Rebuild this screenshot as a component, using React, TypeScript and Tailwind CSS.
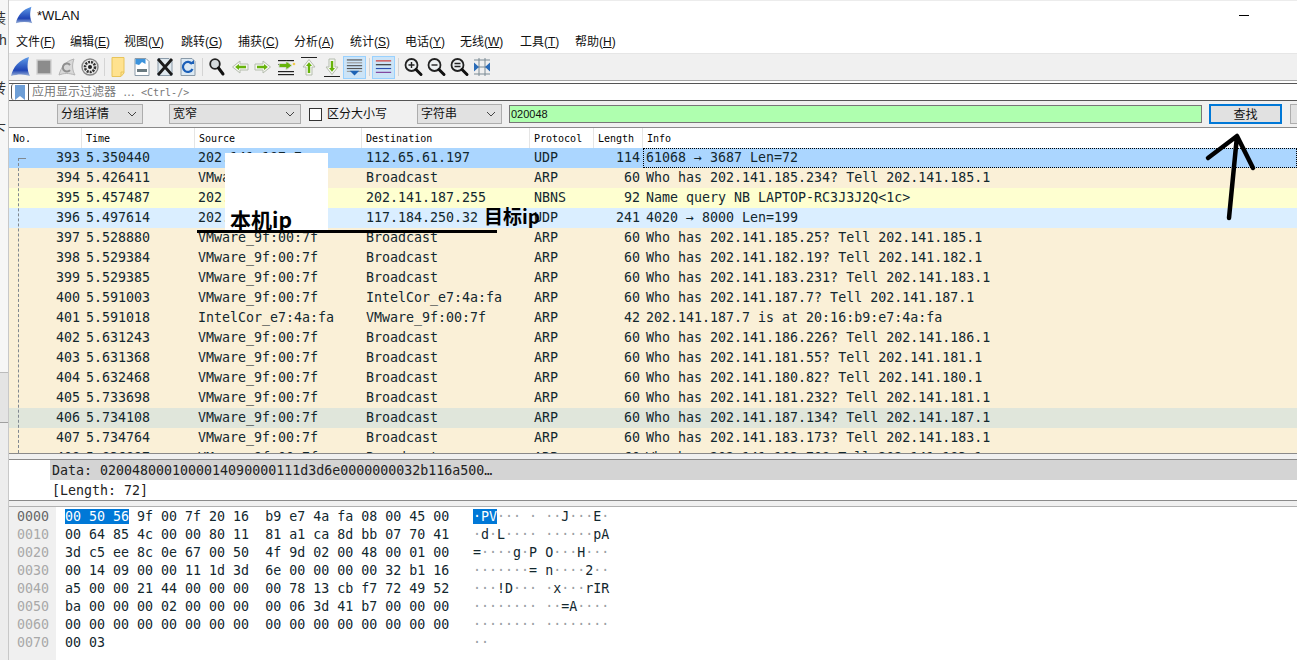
const sans = { fontFamily: '"Liberation Sans", "Noto Sans CJK SC", sans-serif' }

const menus = [
  ['文件(', 'F', ')', 'w-[54px]'],
  ['编辑(', 'E', ')', 'w-[54px]'],
  ['视图(', 'V', ')', 'w-[57px]'],
  ['跳转(', 'G', ')', 'w-[57px]'],
  ['捕获(', 'C', ')', 'w-[56px]'],
  ['分析(', 'A', ')', 'w-[56px]'],
  ['统计(', 'S', ')', 'w-[55px]'],
  ['电话(', 'Y', ')', 'w-[55px]'],
  ['无线(', 'W', ')', 'w-[60px]'],
  ['工具(', 'T', ')', 'w-[55px]'],
  ['帮助(', 'H', ')', 'w-[50px]'],
]

const arp = 'bg-[#faf0d7]'
const udp = 'bg-[#daeeff]'
const VM = 'VMware_9f:00:7f'
const rows = [
  [393, '5.350440', '202.141.187.7', '112.65.61.197', 'UDP', 114, '61068 → 3687 Len=72', 'bg-[#abd6ff]'],
  [394, '5.426411', VM, 'Broadcast', 'ARP', 60, 'Who has 202.141.185.234? Tell 202.141.185.1', arp],
  [395, '5.457487', '202.141.187.7', '202.141.187.255', 'NBNS', 92, 'Name query NB LAPTOP-RC3J3J2Q<1c>', 'bg-[#feffd0]'],
  [396, '5.497614', '202.141.187.7', '117.184.250.32', 'UDP', 241, '4020 → 8000 Len=199', udp],
  [397, '5.528880', VM, 'Broadcast', 'ARP', 60, 'Who has 202.141.185.25? Tell 202.141.185.1', arp],
  [398, '5.529384', VM, 'Broadcast', 'ARP', 60, 'Who has 202.141.182.19? Tell 202.141.182.1', arp],
  [399, '5.529385', VM, 'Broadcast', 'ARP', 60, 'Who has 202.141.183.231? Tell 202.141.183.1', arp],
  [400, '5.591003', VM, 'IntelCor_e7:4a:fa', 'ARP', 60, 'Who has 202.141.187.7? Tell 202.141.187.1', arp],
  [401, '5.591018', 'IntelCor_e7:4a:fa', VM, 'ARP', 42, '202.141.187.7 is at 20:16:b9:e7:4a:fa', arp],
  [402, '5.631243', VM, 'Broadcast', 'ARP', 60, 'Who has 202.141.186.226? Tell 202.141.186.1', arp],
  [403, '5.631368', VM, 'Broadcast', 'ARP', 60, 'Who has 202.141.181.55? Tell 202.141.181.1', arp],
  [404, '5.632468', VM, 'Broadcast', 'ARP', 60, 'Who has 202.141.180.82? Tell 202.141.180.1', arp],
  [405, '5.733698', VM, 'Broadcast', 'ARP', 60, 'Who has 202.141.181.232? Tell 202.141.181.1', arp],
  [406, '5.734108', VM, 'Broadcast', 'ARP', 60, 'Who has 202.141.187.134? Tell 202.141.187.1', 'bg-[#e0e6db]'],
  [407, '5.734764', VM, 'Broadcast', 'ARP', 60, 'Who has 202.141.183.173? Tell 202.141.183.1', arp],
  [408, '5.836897', VM, 'Broadcast', 'ARP', 60, 'Who has 202.141.183.70? Tell 202.141.183.1', arp],
] as const

const hexRows = [
  '00 50 56 9f 00 7f 20 16  b9 e7 4a fa 08 00 45 00',
  '00 64 85 4c 00 00 80 11  81 a1 ca 8d bb 07 70 41',
  '3d c5 ee 8c 0e 67 00 50  4f 9d 02 00 48 00 01 00',
  '00 14 09 00 00 11 1d 3d  6e 00 00 00 00 32 b1 16',
  'a5 00 00 21 44 00 00 00  00 78 13 cb f7 72 49 52',
  'ba 00 00 00 02 00 00 00  00 06 3d 41 b7 00 00 00',
  '00 00 00 00 00 00 00 00  00 00 00 00 00 00 00 00',
  '00 03',
]

const toAscii = (hex: string) =>
  hex.split('  ').map(part =>
    part.split(' ').map(b => {
      const c = parseInt(b, 16)
      return c > 32 && c < 127 ? String.fromCharCode(c) : c === 32 ? ' ' : '·'
    }).join('')
  ).join(' ')

const Fin = ({ id, size = 22 }: { id: string; size?: number }) => (
  <svg width={size} height={size} viewBox="0 0 22 22">
    <defs>
      <linearGradient id={id} x1="0" y1="0" x2="0" y2="1">
        <stop offset="0" stopColor="#5f9be8" />
        <stop offset="0.7" stopColor="#1f45b5" />
        <stop offset="1" stopColor="#9db4d8" />
      </linearGradient>
    </defs>
    <path d="M1 20C3 11 9 4 19 1C17 8 17 14 20 20C14 18 8 18 1 20Z" fill={`url(#${id})`} />
  </svg>
)

const Doc = ({ children, fill = '#fff', stroke = '#8a9aa8' }: { children?: React.ReactNode; fill?: string; stroke?: string }) => (
  <svg width="22" height="22" viewBox="0 0 22 22">
    <path d="M4 2.5H15L18 5.5V19.5H4Z" fill={fill} stroke={stroke} strokeWidth="1" />
    {children}
  </svg>
)

const Mag = ({ mark }: { mark?: string }) => (
  <svg width="22" height="22" viewBox="0 0 22 22">
    <circle cx="9.5" cy="9" r="6" fill="#eef1f3" stroke="#222" strokeWidth="1.8" />
    <path d="M14 13.5L19 18.5" stroke="#111" strokeWidth="3" strokeLinecap="round" />
    {mark && <path d={mark} stroke="#222" strokeWidth="1.4" fill="none" />}
  </svg>
)

const GreenArrow = ({ dir }: { dir: 'left' | 'right' | 'up' | 'down' }) => {
  const rotate = { left: 180, right: 0, up: 270, down: 90 }[dir]
  return (
    <g transform={`rotate(${rotate} 11 11)`}>
      <path d="M3 8H11V5L18.5 11L11 17V14H3Z" fill="#f5f6f1" stroke="#b5bdae" strokeWidth="1" />
      <path d="M5 9.8H12V8L15.8 11L12 14V12.2H5Z" fill="#66b30a" />
    </g>
  )
}

const Lines = ({ colors, ys }: { colors: string[]; ys: number[] }) => (
  <>
    {ys.map((y, i) => <rect key={y} x="3" y={y} width="16" height="1.2" fill={colors[i % colors.length]} />)}
  </>
)

const s22 = { width: 22, height: 22, viewBox: '0 0 22 22' }

const tools: (React.ReactNode | 'sep')[] = [
  <Fin key="start" id="finTool" />,
  <svg key="stop" {...s22}><rect x="4" y="4" width="14" height="14" fill="#8c8c8c" stroke="#d0d0d0" strokeWidth="1.4" /></svg>,
  <svg key="restart" {...s22}>
    <path d="M3 19C5 11 10 5 18 3C16 8 16 14 19 19C13 17 8 17 3 19Z" fill="#d8d8d8" stroke="#b4b4b4" />
    <path d="M14 9A4 4 0 1 0 14 14" fill="none" stroke="#8f8f8f" strokeWidth="2" />
  </svg>,
  <svg key="options" {...s22}>
    <circle cx="11" cy="11" r="8" fill="#eee" stroke="#888" strokeWidth="1.4" />
    <circle cx="11" cy="11" r="5" fill="none" stroke="#333" strokeWidth="2.6" strokeDasharray="2 1" />
    <circle cx="11" cy="11" r="2" fill="#222" />
  </svg>,
  'sep',
  <svg key="open" {...s22}>
    <path d="M4 1.5H16V17L13 20.5H4Z" fill="#ffe28f" stroke="#e8c45a" />
    <path d="M16 16H13V20" fill="none" stroke="#e8c45a" />
  </svg>,
  <Doc key="save"><path d="M4.5 3H14.5V8L11 6L8 9L4.5 8Z" fill="#3c93dc" /><rect x="6" y="13" width="10" height="3" fill="#6a7a80" /></Doc>,
  <Doc key="close" fill="#dfe8ee"><path d="M4 3L18 19M18 3L4 19" stroke="#1b1b1b" strokeWidth="2.8" /></Doc>,
  <Doc key="reload" fill="#dce9f3"><path d="M15 8A5 5 0 1 0 15.5 13" fill="none" stroke="#1b5fb8" strokeWidth="2.2" /><path d="M12 8H17V4Z" fill="#1b5fb8" /></Doc>,
  'sep',
  <svg key="find" {...s22}>
    <circle cx="9" cy="8" r="4.8" fill="#d5dbde" stroke="#222" strokeWidth="1.8" />
    <path d="M12.5 12L17 18" stroke="#111" strokeWidth="3" strokeLinecap="round" />
  </svg>,
  <svg key="back" {...s22}><GreenArrow dir="left" /></svg>,
  <svg key="forward" {...s22}><GreenArrow dir="right" /></svg>,
  <svg key="goto" {...s22}>
    <Lines colors={['#222']} ys={[4, 15, 18]} />
    <rect x="3" y="8" width="3" height="1" fill="#222" />
    <path d="M4 7.5H11V5L17 9.5L11 14V11.5H4Z" fill="#66b30a" stroke="#d4d9cf" strokeWidth="1" />
    <circle cx="19" cy="8" r="1.3" fill="#f2c94c" />
  </svg>,
  <svg key="first" {...s22}><rect x="3" y="1" width="16" height="1" fill="#222" /><GreenArrow dir="up" /></svg>,
  <svg key="last" {...s22}><rect x="3" y="20" width="16" height="1" fill="#222" /><GreenArrow dir="down" /></svg>,
  'auto',
  'sep',
  'color',
  'sep',
  <Mag key="in" mark="M6.5 9H12.5M9.5 6V12" />,
  <Mag key="out" mark="M6.5 9H12.5" />,
  <Mag key="normal" mark="M6.5 7.5H12.5M6.5 10.5H12.5" />,
  <svg key="resize" {...s22}>
    <path d="M3 4H19M3 18H19M3 11H19M8 2V20M14 2V20" stroke="#7b8a94" strokeWidth="1" />
    <path d="M3 6.5L8 11L3 15.5ZM19 6.5L14 11L19 15.5Z" fill="#2b6cb8" />
  </svg>,
]

const Select = ({ label, className }: { label: string; className: string }) => (
  <div className={`h-[20px] shrink-0 bg-[#e1e1e1] border border-[#adadad] flex items-center justify-between pl-[3px] pr-[5px] ${className}`}>
    <span className="text-[12px] text-[#111]">{label}</span>
    <svg width="10" height="6" viewBox="0 0 10 6"><path d="M1 1L5 5L9 1" fill="none" stroke="#444" strokeWidth="1" /></svg>
  </div>
)

const headers = ['No.', 'Time', 'Source', 'Destination', 'Protocol', 'Length', 'Info']
const cols = 'grid grid-cols-[73px_113px_167px_168px_64px_49px_1fr]'

export default function App() {
  return (
    <div className="relative w-[1297px] h-[660px] overflow-hidden bg-white flex" style={sans}>
      {/* bit of the window behind */}
      <div className="w-[8px] h-full shrink-0 bg-[#ededed] flex flex-col overflow-hidden text-[#333] text-[14px] leading-[16px]">
        <div className="h-[372px] shrink-0 bg-[#f6f6f6] flex flex-col">
          <span className="mt-[10px] -ml-[8px] h-[16px]">装</span>
          <span className="mt-[6px] -ml-[1px] h-[16px]">h</span>
          <span className="mt-[32px] -ml-[8px] h-[16px]">转</span>
          <span className="mt-[26px] -ml-[8px] h-[16px]">下</span>
        </div>
        <div className="h-px shrink-0 bg-[#bbbbbb]" />
        <div className="h-[49px] shrink-0 bg-[#e4e4e4]" />
        <div className="h-px shrink-0 bg-[#a0a0a0]" />
      </div>

      <div className="flex-1 min-w-0 flex flex-col border-l border-[#c8c8c8]">
        <div className="h-[30px] flex items-center pl-[6px] pr-[48px] border-t border-[#ececec]">
          <Fin id="finTitle" size={19} />
          <span className="ml-[3px] text-[13px] text-[#111]">*WLAN</span>
          <span className="ml-auto w-[10px] h-px bg-black" />
        </div>

        <div className="h-[23px] flex items-center pl-[7px] text-[12px] text-[#111]">
          {menus.map(([a, b, c, w]) => (
            <span key={b} className={`${w} shrink-0 whitespace-nowrap`}>{a}<u>{b}</u>{c}</span>
          ))}
        </div>

        <div className="h-[28px] bg-[#f0f0f0] border-t border-b border-t-[#e6e6e6] border-b-[#a8a8a8] flex items-center">
          {tools.map((tool, i) => {
            if (tool === 'sep') return <span key={i} className="w-[6px] flex justify-center"><span className="w-px h-[18px] bg-[#d4d4d4]" /></span>
            if (tool === 'auto') return (
              <span key={i} className="w-[23px] h-[23px] flex items-center justify-center bg-[#cce4f7] border border-[#99d1ff]">
                <svg {...s22}>
                  <Lines colors={['#555', '#999', '#555']} ys={[3, 6, 9, 12, 15]} />
                  <path d="M6 15H16L11 20Z" fill="#1e63b5" />
                </svg>
              </span>
            )
            if (tool === 'color') return (
              <span key={i} className="w-[23px] h-[23px] flex items-center justify-center bg-[#cce4f7] border border-[#99d1ff]">
                <svg {...s22}><Lines colors={['#d0312d', '#333', '#2a4fae', '#7d3c98']} ys={[4, 8, 12, 16]} /></svg>
              </span>
            )
            return <span key={i} className="w-[23px] flex justify-center">{tool}</span>
          })}
        </div>

        <div className="h-[2px]" />

        <div className="h-[18px] border-t border-b border-[#555] flex items-center pl-[2px] bg-white">
          <span className="h-full w-[18px] border-l border-r border-[#555] rounded-l-[3px] flex items-center justify-center">
            <svg width="12" height="15" viewBox="0 0 12 15"><path d="M1 0H11V15L6 11L1 15Z" fill="#6d9ed6" /></svg>
          </span>
          <span className="ml-[3px] text-[12px] text-[#777] whitespace-nowrap">应用显示过滤器</span>
          <span className="ml-[7px] text-[12px] text-[#777]">…</span>
          <span className="ml-[6px] text-[10px] text-[#777] whitespace-pre font-['DejaVu_Sans_Mono',monospace]">&lt;Ctrl-/&gt;</span>
        </div>

        <div className="h-[27px] bg-[#f0f0f0] border-b border-[#8a8a8a] flex items-center pl-[48px]">
          <Select label="分组详情" className="w-[86px]" />
          <Select label="宽窄" className="w-[132px] ml-[26px]" />
          <span className="ml-[8px] w-[13px] h-[13px] shrink-0 bg-white border border-[#333]" />
          <span className="ml-[5px] text-[12px] text-[#111] w-[90px] shrink-0">区分大小写</span>
          <Select label="字符串" className="w-[85px]" />
          <input
            readOnly
            value="020048"
            className="ml-[7px] w-[693px] h-[18px] shrink-0 bg-[#afffaf] border border-[#777] pl-[1px] text-[11px] text-[#111] outline-none"
            style={{ fontFamily: '"Liberation Sans", sans-serif' }}
          />
          <button className="ml-[7px] w-[73px] h-[20px] shrink-0 bg-[#e1e1e1] border-2 border-[#0078d7] text-[12px] text-[#111]">查找</button>
          <span className="ml-[8px] w-[20px] h-[20px] shrink-0 bg-[#e1e1e1] border border-[#adadad]" />
        </div>

        {/* packet list */}
        <div className="relative h-[326px] shrink-0 overflow-hidden border-b border-[#8a8a8a] font-['DejaVu_Sans_Mono',monospace] text-[13.3px] text-[#12272e]">
          <div className={`${cols} h-[20px] bg-white text-[10px] text-black items-center`}>
            {headers.map((h, i) => (
              <span key={h} className={`h-full flex items-center pl-[4px] ${i < 6 ? 'border-r border-[#e5e5e5]' : ''}`}>{h}</span>
            ))}
          </div>
          {rows.map((r, idx) => (
            <div key={r[0]} className={`${cols} h-[20px] leading-[20px] whitespace-pre ${r[7]}`}>
              <span className="text-right pr-[2px]">{r[0]}</span>
              <span className="pl-[4px]">{r[1]}</span>
              <span className="pl-[3px]">{r[2]}</span>
              <span className="pl-[4px]">{r[3]}</span>
              <span className="pl-[4px]">{r[4]}</span>
              <span className="text-right pr-[3px]">{r[5]}</span>
              {idx === 0
                ? <span className="pl-[2px] border border-dotted border-black leading-[18px]">{r[6]}</span>
                : <span className="pl-[3px]">{r[6]}</span>}
            </div>
          ))}
          {/* conversation bracket */}
          <div className="absolute left-[9px] top-[30px] w-[8px] h-[295px] border-l border-t border-l-[#808890] border-t-[#808890] [border-left-style:dashed] [border-top-style:solid]" />
        </div>

        <div className="h-[6px] shrink-0 bg-[#f0f0f0] border-b border-[#8a8a8a]" />

        {/* packet details */}
        <div className="h-[41px] shrink-0 font-['DejaVu_Sans_Mono',monospace] text-[13.3px] text-[#222] bg-white border-b border-[#8a8a8a]">
          <div className="h-[20px] ml-[41px] pl-[2px] bg-[#d4d4d4] leading-[21px] whitespace-pre">Data: 0200480001000014090000111d3d6e0000000032b116a500…</div>
          <div className="h-[20px] ml-[41px] pl-[2px] leading-[21px]">[Length: 72]</div>
        </div>

        <div className="h-[6px] shrink-0 bg-[#f0f0f0] border-b border-[#b0b0b0]" />

        {/* packet bytes */}
        <div className="flex-1 flex font-['DejaVu_Sans_Mono',monospace] text-[13.3px] text-[#12272e] leading-[18px] whitespace-pre">
          <div className="w-[47px] bg-[#f0f0f0] pl-[8px] pt-[1px]">
            {hexRows.map((_, i) => (
              <div key={i} className={i === 0 ? 'text-[#666]' : 'text-[#a8a8a8]'}>{(i * 16).toString(16).padStart(4, '0')}</div>
            ))}
          </div>
          <div className="pl-[9px] pt-[1px] w-[417px]">
            {hexRows.map((h, i) => (
              <div key={i}>
                {i === 0 ? <><span className="bg-[#0078d7] text-white">{h.slice(0, 8)}</span>{h.slice(8)}</> : h}
              </div>
            ))}
          </div>
          <div className="pt-[1px]">
            {hexRows.map((h, i) => {
              const text = toAscii(h)
              return (
                <div key={i}>
                  {text.split('').map((c, j) => (
                    <span key={j} className={i === 0 && j < 3 ? 'bg-[#0078d7] text-white' : c === '·' ? 'text-[#9aa0a4]' : ''}>{c}</span>
                  ))}
                </div>
              )
            })}
          </div>
        </div>
      </div>

      {/* hand drawn notes on top of the screenshot */}
      <div className="absolute left-[225px] top-[153px] w-[103px] h-[78px] bg-white" />
      <span className="absolute left-[230px] top-[206px] text-[21px] leading-[26px] font-bold text-black" style={{ fontFamily: '"Noto Sans CJK SC", sans-serif' }}>本机ip</span>
      <span className="absolute left-[484px] top-[204px] text-[19px] leading-[24px] font-bold text-black" style={{ fontFamily: '"Noto Sans CJK SC", sans-serif' }}>目标ip</span>
      <div className="absolute left-[197px] top-[230px] w-[300px] h-[3px] bg-black" />
      <svg className="absolute left-[1200px] top-[130px]" width="60" height="95" viewBox="0 0 60 95">
        <path d="M29 88L37 6M8 28L37 6L53 38" fill="none" stroke="#000" strokeWidth="4.5" strokeLinecap="round" strokeLinejoin="round" />
      </svg>
    </div>
  )
}
